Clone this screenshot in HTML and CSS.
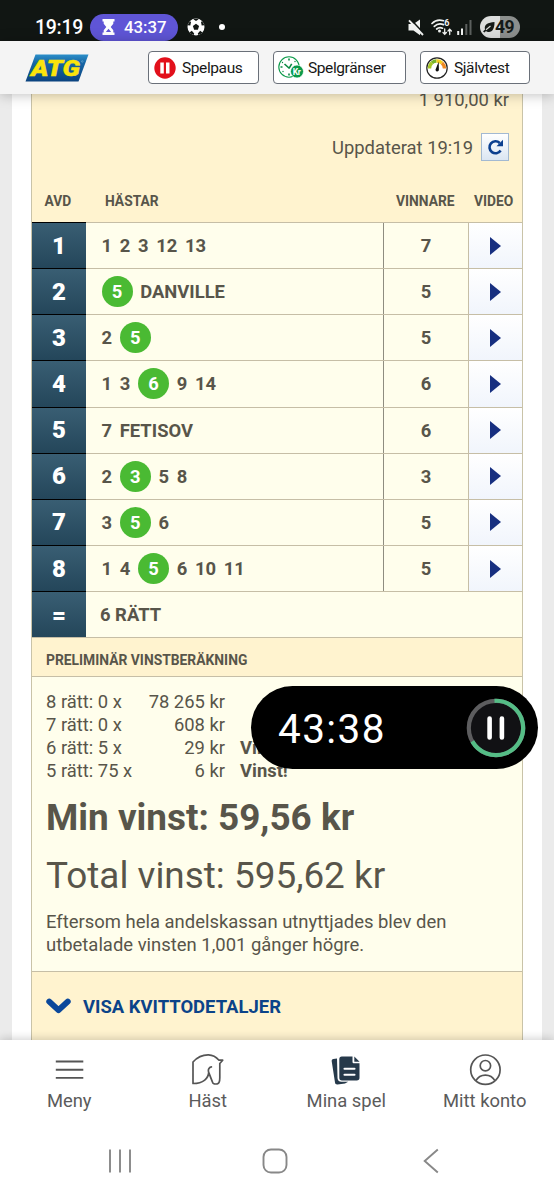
FILE: index.html
```html
<!DOCTYPE html>
<html lang="sv">
<head>
<meta charset="utf-8">
<meta name="viewport" content="width=device-width">
<title>ATG – Mina spel</title>
<link rel="stylesheet" href="styles.css">
</head>
<body>
<div class="phone">
  <div class="status">
    <span class="clock">19:19</span>
    <span class="chip">
      <svg width="13" height="16" viewBox="0 0 13 16"><path d="M.5 0h12v2.500h-1.200V4.700L8.700 8l2.600 3.300v2.200h1.200V16H.5v-2.500h1.200v-2.200L4.300 8 1.700 4.700V2.500H.5z" fill="#fff"/><path d="M6.500 9.800l2.600 3.100H3.900z" fill="#5f55d6"/></svg>
      <span>43:37</span>
    </span>
    <svg class="ball" width="18" height="18" viewBox="0 0 18 18"><circle cx="9" cy="9" r="8.500" fill="#fff"/><g fill="#111613"><path d="M9 5.800l3.100 2.300-1.200 3.600H7.100L5.900 8.100z"/><path d="M6.300 1.200L9 3l2.700-1.800A8.500 8.500 0 0 0 6.300 1.200zM.7 7.300l2.600.2L4 4.100 3 3.200A8.500 8.500 0 0 0 .7 7.300zM17.300 7.300l-2.600.2L14 4.100l1-.9a8.500 8.500 0 0 1 2.300 4.100zM2.500 14.500l2.300-1.700 2.400 2.600-.5 1.700a8.500 8.500 0 0 1-4.200-2.600zM15.500 14.500l-2.300-1.700-2.400 2.600.5 1.700a8.500 8.500 0 0 0 4.200-2.600z"/></g></svg>
    <span class="dot"></span>
    <span class="grow"></span>
    <svg class="mute" width="16" height="17" viewBox="0 0 16 17"><path d="M.5 5h5L12 .5v15.700L5.500 11.500h-5z" fill="#f1f3f2"/><path d="M2.300 0l14 15" stroke="#111613" stroke-width="1.700"/><path d="M1 1.300l14 14.700" stroke="#f1f3f2" stroke-width="1.900"/></svg>
    <svg class="wifi" width="22" height="18" viewBox="0 0 22 18"><g fill="none" stroke="#f1f3f2" stroke-width="1.700" stroke-linecap="round"><path d="M1 5.500C4 2.300 8.500 1.400 12.500 2.700M3.300 8.300C6 5.800 9.500 5.300 12.500 6.600M5.700 11c1.700-1.500 3.800-1.700 5.800-.8"/><path d="M13.700 11v5M12 14.500l1.700 1.800 1.700-1.800M18.700 16.500v-5M17 13l1.700-1.800 1.700 1.800" stroke-width="1.300"/></g><circle cx="8.500" cy="13" r="1.500" fill="#f1f3f2"/><text x="13.300" y="8.300" class="wifi-gen">6</text></svg>
    <svg class="signal" width="15" height="16" viewBox="0 0 15 16"><path d="M1.200 12v4M5 9.500V16" stroke="#f1f3f2" stroke-width="2"/><path d="M9.300 5v11M13.500 1v15" stroke="#5c605e" stroke-width="2"/></svg>
    <span class="battery"><svg width="12" height="11" viewBox="0 0 12 11"><path d="M11.500 0c.2 6-2 10-5.500 10-1.500 0-2.300-.4-3-1L1.500 10.500 0 9.500l2-2C.8 2.500 5 .5 11.500 0z" fill="#151a17"/><path d="M3 7.700L7.500 4" stroke="#d8dad9" stroke-width="1.200"/></svg><span>49</span></span>
  </div>

  <header class="top">
    <svg class="logo" width="64" height="28" viewBox="0 0 64 28"><defs><linearGradient id="lg" x1="0" y1="0" x2="0" y2="1"><stop offset="0" stop-color="#2b8fc9"/><stop offset=".3" stop-color="#1767a6"/><stop offset="1" stop-color="#0b437f"/></linearGradient></defs><path d="M10.500.5H63.500L53.500 27.500H.5z" fill="url(#lg)"/><text x="6" y="21.500" class="logo-text" textLength="49" lengthAdjust="spacingAndGlyphs">ATG</text><circle cx="57.300" cy="7.500" r=".8" fill="none" stroke="#8fc0df" stroke-width=".4"/></svg>
    <div class="tools">
      <span class="tool pause"><svg width="22" height="22" viewBox="0 0 22 22"><circle cx="11" cy="11" r="10.700" fill="#e2101b"/><path d="M6.300 5.500h3.500v11H6.300zM12 5.500h3.500v11H12z" fill="#fff"/></svg><span>Spelpaus</span></span>
      <span class="tool limits"><svg width="26" height="23" viewBox="0 0 26 23"><circle cx="11" cy="11" r="10.200" fill="none" stroke="#0b9a49" stroke-width="1.100"/><path d="M11.500 12.500L6.500 8M11 12.300l2.700-4.500M11 2.500v2M2.500 11h2M17.500 11h2M11 17.500v2" stroke="#0b8a42" stroke-width="1.600"/><circle cx="4.500" cy="6.500" r=".7" fill="#0b8a42"/><circle cx="5" cy="15.500" r=".7" fill="#0b8a42"/><circle cx="17" cy="5.500" r=".7" fill="#0b8a42"/><circle cx="19" cy="15.500" r="6.500" fill="#0b9a49" stroke="#fff" stroke-width=".7"/><text x="14.800" y="18.700" class="kr">Kr</text></svg><span>Spelgränser</span></span>
      <span class="tool test"><svg width="22" height="22" viewBox="0 0 22 22"><circle cx="11" cy="11" r="10.200" fill="#fff" stroke="#222" stroke-width="1.200"/><g fill="none" stroke-width="3.400"><path d="M3.500 11.500A7.500 7.500 0 0 1 6 5.700" stroke="#a6c626"/><path d="M6 5.700A7.500 7.500 0 0 1 10.500 4" stroke="#78b42b"/><path d="M10.500 4a7.500 7.500 0 0 1 5.500 2" stroke="#f4d022"/><path d="M16 6a7.500 7.500 0 0 1 2.500 5.500" stroke="#ef8a22"/></g><path d="M12.700 4.500L12.900 12.500a1.700 1.700 0 1 1-3-.8z" fill="#111"/></svg><span>Självtest</span></span>
    </div>
  </header>

  <main class="content">
    <section class="card">
      <div class="summary">
        <div class="sum">1 910,00 kr</div>
        <div class="updated"><span>Uppdaterat 19:19</span><span class="refresh"><svg width="17" height="17" viewBox="0 0 17 17"><path d="M13.600 11.500A6 6 0 1 1 12.700 4" fill="none" stroke="#0b3f8f" stroke-width="2.600"/><path d="M16 .8V7.200H9.500z" fill="#0b3f8f"/></svg></span></div>
        <div class="cols"><span class="c-avd">AVD</span><span class="c-horse">HÄSTAR</span><span class="c-win">VINNARE</span><span class="c-vid">VIDEO</span></div>
      </div>
      <div class="legs">
        <div class="leg"><b>1</b><div class="picks"><i>1</i><i>2</i><i>3</i><i>12</i><i>13</i></div><div class="win">7</div><div class="vid"><span class="play"></span></div></div>
        <div class="leg"><b>2</b><div class="picks"><i class="hit">5</i><i>DANVILLE</i></div><div class="win">5</div><div class="vid"><span class="play"></span></div></div>
        <div class="leg"><b>3</b><div class="picks"><i>2</i><i class="hit">5</i></div><div class="win">5</div><div class="vid"><span class="play"></span></div></div>
        <div class="leg"><b>4</b><div class="picks"><i>1</i><i>3</i><i class="hit">6</i><i>9</i><i>14</i></div><div class="win">6</div><div class="vid"><span class="play"></span></div></div>
        <div class="leg"><b>5</b><div class="picks"><i>7</i><i>FETISOV</i></div><div class="win">6</div><div class="vid"><span class="play"></span></div></div>
        <div class="leg"><b>6</b><div class="picks"><i>2</i><i class="hit">3</i><i>5</i><i>8</i></div><div class="win">3</div><div class="vid"><span class="play"></span></div></div>
        <div class="leg"><b>7</b><div class="picks"><i>3</i><i class="hit">5</i><i>6</i></div><div class="win">5</div><div class="vid"><span class="play"></span></div></div>
        <div class="leg"><b>8</b><div class="picks"><i>1</i><i>4</i><i class="hit">5</i><i>6</i><i>10</i><i>11</i></div><div class="win">5</div><div class="vid"><span class="play"></span></div></div>
        <div class="leg total"><b>=</b><div class="picks">6 RÄTT</div></div>
      </div>
      <h2 class="band">PRELIMINÄR VINSTBERÄKNING</h2>
      <div class="result">
        <div class="payouts">
          <span>8 rätt: 0 x</span><span class="amt">78 265 kr</span><strong></strong>
          <span>7 rätt: 0 x</span><span class="amt">608 kr</span><strong></strong>
          <span>6 rätt: 5 x</span><span class="amt">29 kr</span><strong>Vinst!</strong>
          <span>5 rätt: 75 x</span><span class="amt">6 kr</span><strong>Vinst!</strong>
        </div>
        <div class="mine">Min vinst: 59,56 kr</div>
        <div class="all">Total vinst: 595,62 kr</div>
        <p class="note">Eftersom hela andelskassan utnyttjades blev den<br>utbetalade vinsten 1,001 gånger högre.</p>
      </div>
      <div class="more"><svg width="25" height="17" viewBox="0 0 25 17"><path d="M3.300 3.600l9.200 8.500 9.200-8.500" fill="none" stroke="#0b489b" stroke-width="6" stroke-linecap="round" stroke-linejoin="round"/></svg><span>VISA KVITTODETALJER</span></div>
    </section>
  </main>

  <nav class="tabs">
    <div class="tab"><svg width="32" height="32" viewBox="0 0 32 32"><path d="M2.800 7.500h27.500M2.800 15.700h27.500M2.800 23.900h27.500" stroke="#555" stroke-width="1.900"/></svg><span>Meny</span></div>
    <div class="tab"><svg width="32" height="32" viewBox="0 0 32 32"><path d="M1 29.500V8C6 2.500 12 .8 16.500.9c5 .2 8 2.500 10.500 5.300h3.700l-2.900 3.300v14.300c0 3.500-.8 5.700-2.500 6-3 .5-4.600.2-5-2.200l-3.600-9.200C16.500 24 11.500 29.500 1 29.500zM16.700 18.400c-.9-2.600.1-5 2.700-5.500" fill="none" stroke="#555" stroke-width="1.700" stroke-linejoin="round" stroke-linecap="round"/></svg><span>Häst</span></div>
    <div class="tab"><svg width="32" height="32" viewBox="0 0 32 32"><path d="M7 4.500L3.300 5.100C2.200 5.300 1.600 6 1.700 7.200L5 28.500c.3 1.500 1 2 2.500 1.900l7.500-.8 3.200-1.800H11.500C9 27.800 7.500 26.300 7.500 24z" fill="#26394a"/><path d="M11.800 2.500h10.700v5.300c0 1 .5 1.500 1.500 1.500h5.500v14.500c0 1.800-.9 2.700-2.700 2.700H12c-1.800 0-2.700-.9-2.700-2.700V5.200c0-1.800.8-2.700 2.500-2.700z" fill="#26394a"/><path d="M24.300 2.500l5.300 5.200h-5.300z" fill="#26394a"/><path d="M14.500 14.700h10M14.500 20.700h10" stroke="#fff" stroke-width="2.100" stroke-linecap="round"/></svg><span>Mina spel</span></div>
    <div class="tab"><svg width="32" height="32" viewBox="0 0 32 32"><g fill="none" stroke="#555" stroke-width="1.700"><circle cx="16.400" cy="15.700" r="14.700"/><circle cx="16.400" cy="11.700" r="5.200"/><path d="M6.900 26.700C8.900 23 12.400 21.100 16.400 21.100S23.900 23 25.900 26.700"/></g></svg><span>Mitt konto</span></div>
  </nav>
  <div class="sysnav">
    <svg width="24" height="24" viewBox="0 0 24 24"><path d="M2 .5v23M12 .5v23M22 .5v23" stroke="#888" stroke-width="1.900"/></svg>
    <svg class="home" width="26" height="26" viewBox="0 0 26 26"><rect x="1.500" y="1.500" width="23" height="23" rx="7.500" fill="none" stroke="#888" stroke-width="1.900"/></svg>
    <svg width="16" height="26" viewBox="0 0 16 26"><path d="M14.800 1.500L1.700 13l13.100 11.500" fill="none" stroke="#888" stroke-width="1.900"/></svg>
  </div>

  <div class="timer">
    <span>43:38</span>
    <svg width="60" height="60" viewBox="0 0 60 60"><circle cx="30" cy="30" r="27.200" fill="#111114" stroke="#5d5d5f" stroke-width="4.200"/><path d="M28.500 2.800A27.200 27.200 0 1 1 6.300 43.400" fill="none" stroke="#55bd86" stroke-width="4.200"/><path d="M23.600 20.500v19M35.900 20.500v19" stroke="#fff" stroke-width="4.600" stroke-linecap="round"/></svg>
  </div>
</div>
</body>
</html>
```
FILE: styles.css
```css
* { box-sizing: border-box; }
body { margin: 0; font-family: Roboto, "Liberation Sans", sans-serif; color: #58554a; }
svg { display: block; flex: none; }
.phone { position: relative; width: 554px; height: 1200px; display: flex; flex-direction: column; overflow: hidden; background: #fff; }

.status { height: 41px; flex: none; background: #111613; color: #fff; display: flex; align-items: center; padding: 13px 34px 0 35px; white-space: nowrap; }
.clock { width: 55px; font-size: 19.500px; font-weight: 500; letter-spacing: -.3px; }
.chip { width: 88px; height: 27px; border-radius: 14px; background: #5f55d6; display: flex; align-items: center; gap: 9px; padding-left: 12px; font-size: 16.800px; font-weight: 500; }
.ball { margin-left: 9px; }
.dot { width: 6px; height: 6px; border-radius: 50%; background: #fff; margin-left: 14px; }
.grow { flex: 1; }
.wifi { margin-left: 7px; }
.wifi-gen { font: 700 9px Roboto, sans-serif; fill: #f1f3f2; }
.signal { margin-left: 4px; }
.battery { margin-left: 8px; width: 40px; height: 22px; border-radius: 11px; background: linear-gradient(90deg, #dcdedd 50%, #8c8f8d 50%); color: #151a17; display: flex; align-items: center; padding-left: 3px; font-size: 17.500px; font-weight: 700; letter-spacing: -.5px; }

.top { height: 53px; flex: none; background: #f4f4f4; position: relative; z-index: 2; box-shadow: 0 1px 12px rgba(0,0,0,.25); display: flex; align-items: flex-start; padding: 10px 0 0 25px; }
.logo { margin-top: 3px; }
.logo-text { font: italic 900 22px Roboto, sans-serif; fill: #fbe40b; stroke: #fbe40b; stroke-width: .5px; }
.tools { display: flex; gap: 14px; margin-left: 59px; }
.tool { height: 33px; border: 1px solid #6a7079; border-radius: 4px; background: #fff; display: flex; align-items: center; font-size: 15.500px; letter-spacing: -.4px; color: #171717; white-space: nowrap; line-height: 20px; padding-top: 1px; }
.tool svg { margin-top: -1px; }
.pause { width: 111px; padding-left: 5px; gap: 6px; }
.limits { width: 133px; padding-left: 4px; gap: 4px; }
.test { width: 110px; padding-left: 5px; gap: 6px; }
.kr { font: 700 8.500px Roboto, sans-serif; fill: #fff; }

.content { height: 946px; flex: none; background: #ebebeb; overflow: hidden; padding: 0 12px; }
.card { height: 946px; background: #fffeec; border: solid #fff; border-width: 0 19px; box-shadow: inset 1px 0 #c9c3a8, inset -1px 0 #c9c3a8; padding: 0 1px; }
.summary { height: 129px; background: #fff3cf; border-bottom: 1px solid #c6bea6; overflow: hidden; }
.sum { margin-top: -6px; padding-right: 13px; text-align: right; font-size: 18.400px; line-height: 24px; }
.updated { margin-top: 21px; height: 28px; display: flex; align-items: center; justify-content: flex-end; gap: 8px; padding-right: 13px; font-size: 18.400px; }
.refresh { width: 28px; height: 28px; border: 1px solid #a3b9d2; background: linear-gradient(#fff, #dbe6f3); display: grid; place-items: center; }
.cols { display: grid; grid-template-columns: 54px 298px 85px 1fr; margin-top: 29px; line-height: 22px; font-size: 13.800px; font-weight: 700; }
.c-avd { padding-left: 12.500px; }
.c-horse { padding-left: 19px; }
.c-win { padding-left: 12px; }
.c-vid { padding-left: 5px; }

.legs { display: grid; grid-template-rows: repeat(9, 46.150px); font-weight: 700; }
.leg { display: grid; grid-template-columns: 54px 298px 85px 1fr; border-bottom: 1px solid #c6bea6; font-size: 18.400px; }
.leg b { display: grid; place-items: center; color: #fff; font-size: 24px; background: linear-gradient(#395e73, #24465a); margin-bottom: -1px; border-bottom: 1px solid #000; box-shadow: 0 -1px #000; }
.picks { display: flex; align-items: center; padding-left: 15.500px; gap: 7.700px; border-right: 1px solid #8f8d80; }
.picks i { font-style: normal; }
.picks i.hit { width: 31px; height: 31px; border-radius: 50%; background: #4aba33; color: #fff; display: grid; place-items: center; }
.win { display: grid; place-items: center; border-right: 1px solid #c6bea6; }
.vid { display: grid; place-items: center; background: linear-gradient(#fff, #f1f5fc); }
.play { border: solid transparent; border-width: 9px 0 9px 11px; border-left-color: #172f80; }
.total .picks { grid-column: 2 / 5; border: 0; padding-left: 14px; }
.total b { border-bottom: 0; margin-bottom: 0; }

.band { margin: 0; height: 39px; background: #fff3cf; border-bottom: 1px solid #c6bea6; font-size: 13.850px; line-height: 45px; padding-left: 14px; }
.result { height: 295px; padding: 14px 14px 0; border-bottom: 1px solid #c6bea6; }
.payouts { display: grid; grid-template-columns: 88px 91px 1fr; font-size: 18.400px; line-height: 22.900px; white-space: nowrap; }
.amt { text-align: right; }
.payouts strong { padding-left: 15px; }
.mine { font-size: 36.900px; font-weight: 700; line-height: 44px; margin-top: 13px; white-space: nowrap; }
.all { font-size: 36.900px; line-height: 44px; margin-top: 14px; white-space: nowrap; }
.note { margin: 13px 0 0; font-size: 18.450px; line-height: 23px; white-space: nowrap; }
.more { height: 69px; background: #fff3cf; display: flex; align-items: center; gap: 12px; padding-left: 14px; color: #0b4389; font-size: 18.450px; font-weight: 700; }

.tabs { height: 82px; flex: none; position: relative; z-index: 2; background: #fff; box-shadow: 0 -1px 9px rgba(0,0,0,.2); display: grid; grid-template-columns: repeat(4, 138.500px); padding-top: 14px; }
.tab { display: flex; flex-direction: column; align-items: center; font-size: 18.400px; line-height: 22px; color: #5b5b5b; gap: 4px; }
.sysnav { height: 78px; flex: none; position: relative; z-index: 3; background: #fff; display: flex; align-items: center; padding: 0 0 0 108px; }
.home { margin: 0 135px 0 130px; }

.timer { position: absolute; left: 251px; top: 686px; width: 287px; height: 83px; border-radius: 42px; background: #000; color: #fff; z-index: 4; display: flex; align-items: center; justify-content: space-between; padding: 3px 12px 0 27px; font-size: 40.500px; letter-spacing: 1.400px; }
.timer svg { margin-top: -2px; }
```
